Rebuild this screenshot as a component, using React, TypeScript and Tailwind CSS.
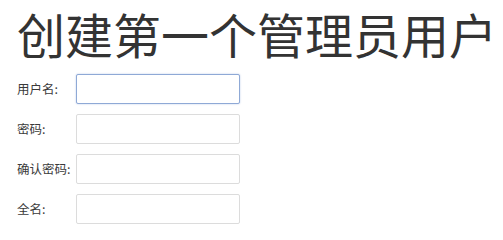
const fields = [
  { label: '用户名:', focused: true },
  { label: '密码:', focused: false },
  { label: '确认密码:', focused: false },
  { label: '全名:', focused: false },
];

export default function App() {
  return (
    <div
      className="min-h-[233px] bg-white text-[#333]"
      style={{ fontFamily: '"Noto Sans CJK SC", "Noto Sans", sans-serif' }}
    >
      <h1 className="pl-[17px] text-[48px] leading-[64px] pt-[1px] whitespace-nowrap">
        创建第一个管理员用户
      </h1>
      <div className="pl-[17px] mt-[9px] flex flex-col gap-[10px]">
        {fields.map((f) => (
          <div key={f.label} className="flex items-center h-[30px]">
            <span className="w-[59px] text-[12.5px] text-[#3a3a3a]">{f.label}</span>
            <input
              className={`w-[164px] h-[30px] border bg-white outline-none rounded-[2px] ${
                f.focused ? 'border-[#8fa9d6] shadow-[0_0_2px_#b8c9e6]' : 'border-[#dcdcdc]'
              }`}
            />
          </div>
        ))}
      </div>
    </div>
  );
}
